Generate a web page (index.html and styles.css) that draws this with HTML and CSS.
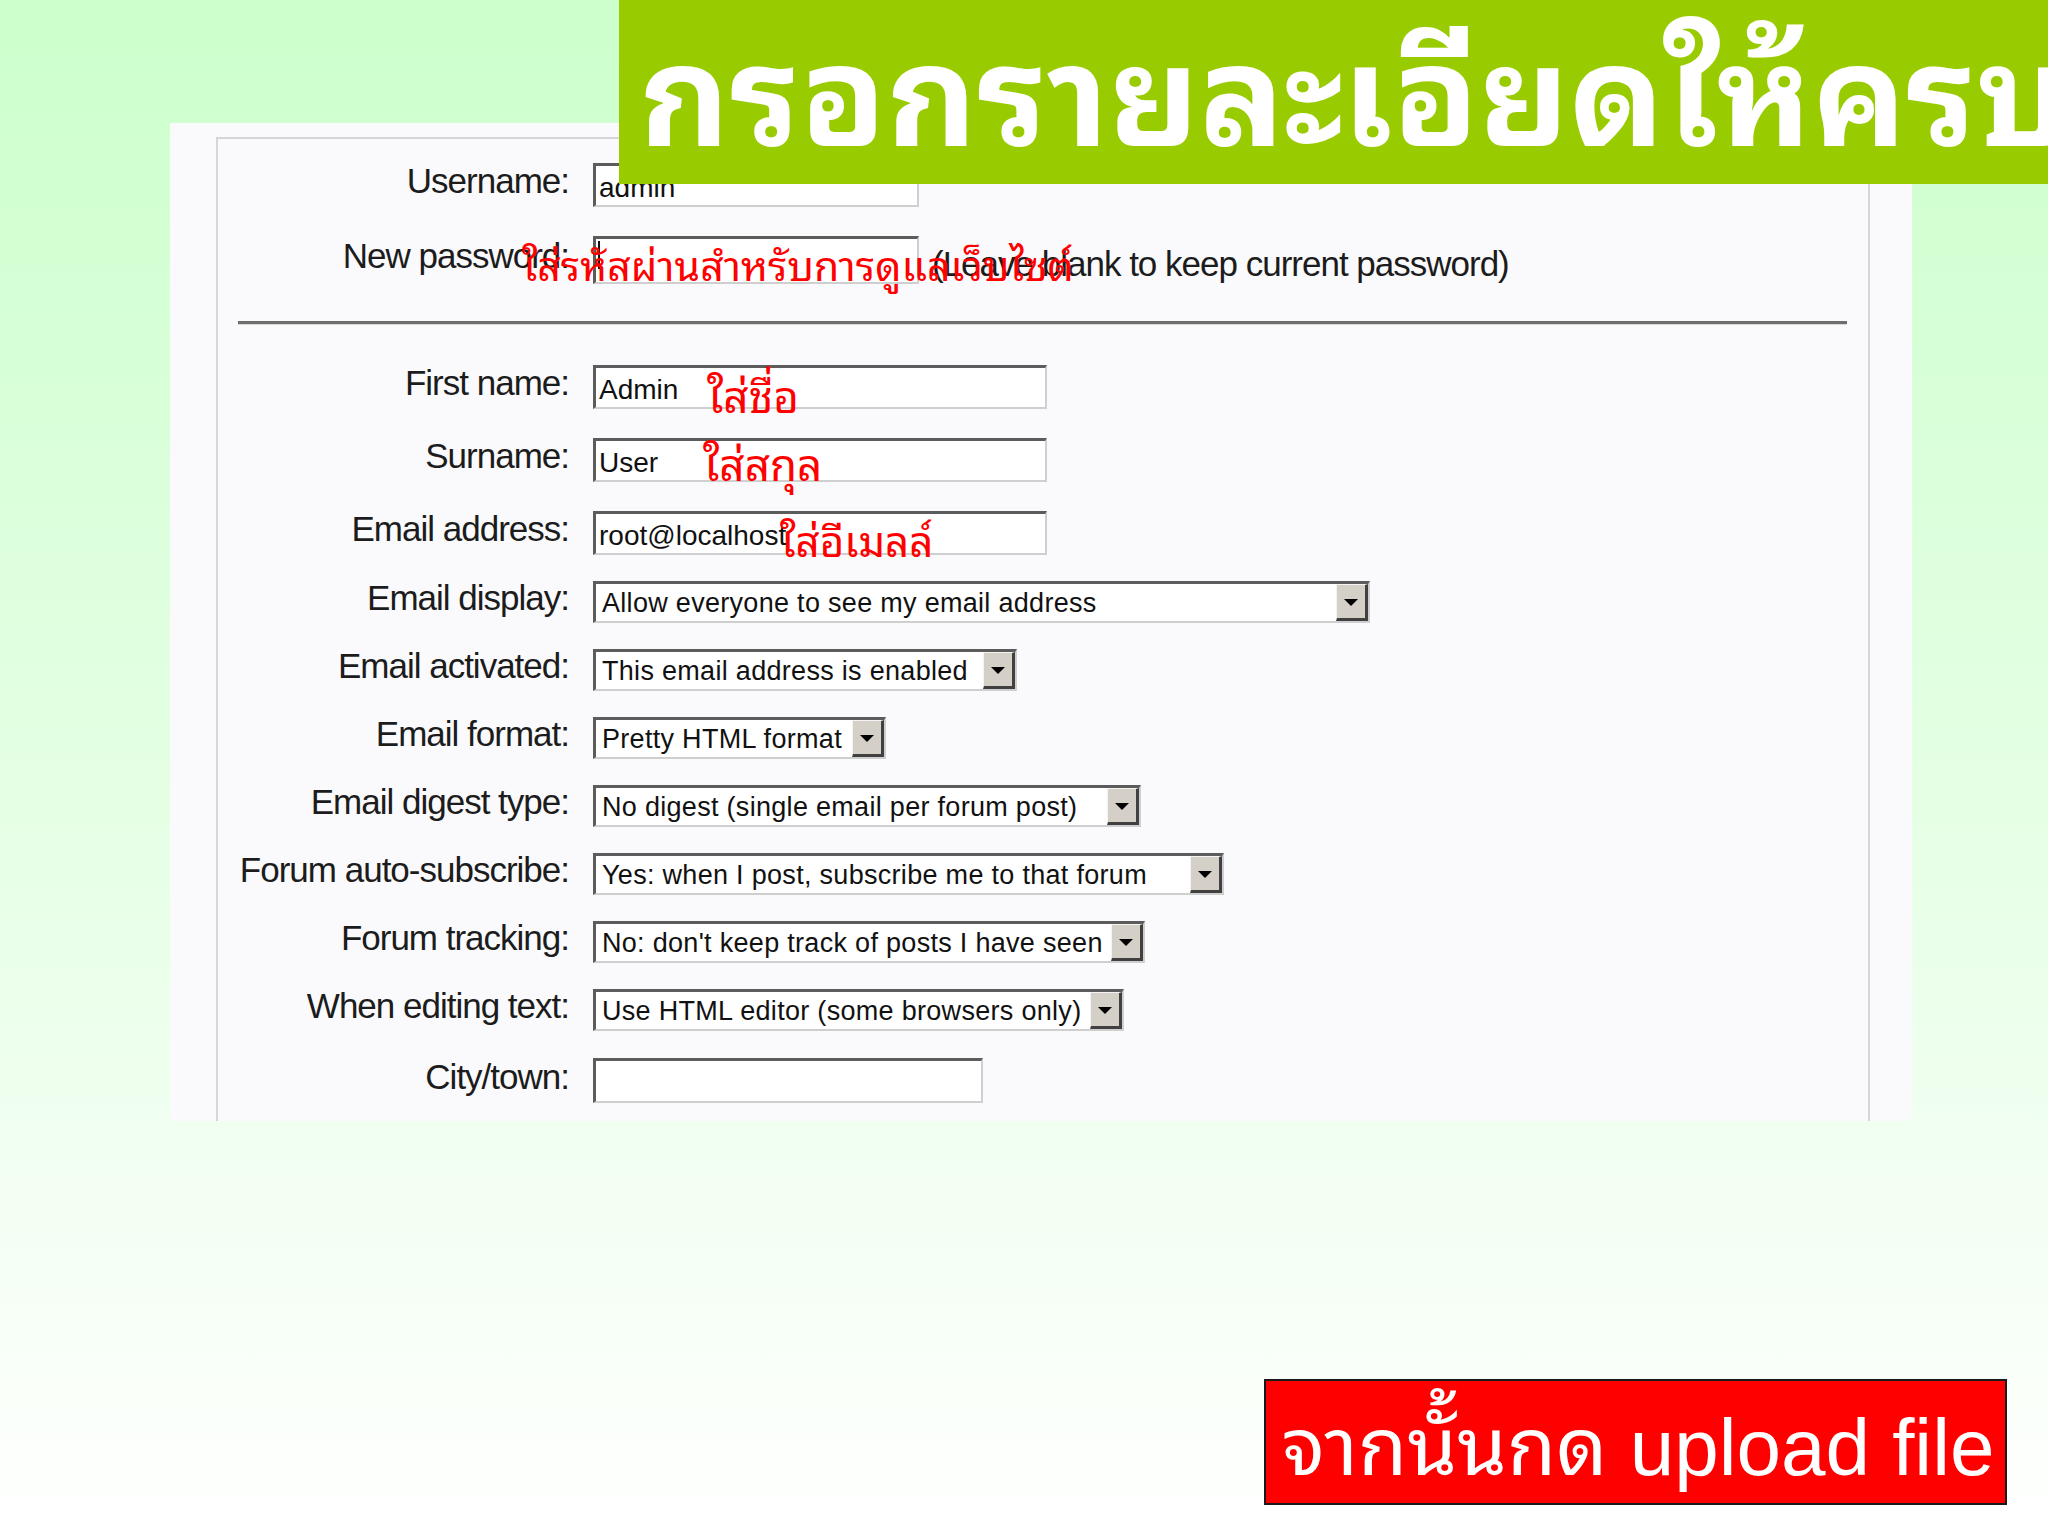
FILE: index.html
```html
<!DOCTYPE html>
<html lang="th">
<head>
<meta charset="utf-8">
<title>กรอกรายละเอียดให้ครบ</title>
<link rel="stylesheet" href="styles.css">
</head>
<body>
<div class="slide">
  <div class="title-bar"><h1 class="title">กรอกรายละเอียดให้ครบ</h1></div>

  <div class="panel">
    <div class="fieldset">
      <div class="row first">
        <span class="label">Username:</span>
        <span class="field w-short"><span class="val">admin</span></span>
      </div>
      <div class="row">
        <span class="label">New password:</span>
        <span class="field-line">
          <span class="field w-short"><span class="caret"></span></span>
          <span class="hint">(Leave blank to keep current password)</span>
        </span>
      </div>

      <div class="rule"></div>

      <div class="row after-rule">
        <span class="label">First name:</span>
        <span class="field w-mid"><span class="val">Admin</span></span>
      </div>
      <div class="row">
        <span class="label">Surname:</span>
        <span class="field w-mid"><span class="val">User</span></span>
      </div>
      <div class="row">
        <span class="label">Email address:</span>
        <span class="field w-mid"><span class="val">root@localhost</span></span>
      </div>

      <div class="row sel">
        <span class="label">Email display:</span>
        <span class="select w-display"><span class="opt">Allow everyone to see my email address</span><span class="arrow"></span></span>
      </div>
      <div class="row sel">
        <span class="label">Email activated:</span>
        <span class="select w-activated"><span class="opt">This email address is enabled</span><span class="arrow"></span></span>
      </div>
      <div class="row sel">
        <span class="label">Email format:</span>
        <span class="select w-format"><span class="opt">Pretty HTML format</span><span class="arrow"></span></span>
      </div>
      <div class="row sel">
        <span class="label">Email digest type:</span>
        <span class="select w-digest"><span class="opt">No digest (single email per forum post)</span><span class="arrow"></span></span>
      </div>
      <div class="row sel">
        <span class="label">Forum auto-subscribe:</span>
        <span class="select w-auto"><span class="opt">Yes: when I post, subscribe me to that forum</span><span class="arrow"></span></span>
      </div>
      <div class="row sel">
        <span class="label">Forum tracking:</span>
        <span class="select w-track"><span class="opt">No: don't keep track of posts I have seen</span><span class="arrow"></span></span>
      </div>
      <div class="row sel">
        <span class="label">When editing text:</span>
        <span class="select w-edit"><span class="opt">Use HTML editor (some browsers only)</span><span class="arrow"></span></span>
      </div>
      <div class="row city">
        <span class="label">City/town:</span>
        <span class="field w-city"></span>
      </div>
    </div>

    <span class="note note-pass">ใส่รหัสผ่านสำหรับการดูแลเว็บไซต์</span>
    <span class="note note-first">ใส่ชื่อ</span>
    <span class="note note-sur">ใส่สกุล</span>
    <span class="note note-mail">ใส่อีเมลล์</span>
  </div>

  <div class="cta-wrap">
    <div class="cta">จากนั้นกด upload file</div>
  </div>
</div>
</body>
</html>
```

FILE: styles.css
```css
html, body {
  margin: 0;
  padding: 0;
}

body {
  width: 2048px;
  height: 1536px;
  overflow: hidden;
  background: linear-gradient(180deg, #ccffcc 0%, #e6ffe6 55%, #ffffff 100%);
  font-family: "Liberation Sans", Arial, sans-serif;
}

.slide {
  position: relative;
  width: 2048px;
  height: 1536px;
  padding-top: 123px;
  box-sizing: border-box;
}

/* ---------- title ---------- */
.title-bar {
  position: absolute;
  top: 0;
  left: 619px;
  right: 0;
  height: 184px;
  background: #99cc00;
  overflow: hidden;
  z-index: 3;
}

.title {
  margin: 0;
  padding-left: 20px;
  font-family: "Noto Sans Thai Looped", "Noto Sans Thai", "Noto Sans", sans-serif;
  font-weight: 700;
  font-size: 140px;
  line-height: 167px;
  color: #ffffff;
  white-space: nowrap;
}

/* ---------- screenshot panel ---------- */
.panel {
  position: relative;
  margin-left: 170px;
  width: 1742px;
  height: 998px;
  background: #fafafc;
  padding: 14px 42px 0 46px;
  box-sizing: border-box;
}

.fieldset {
  height: 100%;
  border: 2px solid #d6d6d8;
  border-bottom: none;
  box-sizing: border-box;
  padding-top: 24px;
}

.row {
  display: grid;
  grid-template-columns: 351px auto;
  column-gap: 24px;
  align-items: center;
  height: 44px;
  margin-top: 29px;
}

.row.first { margin-top: 0; }
.row.after-rule { margin-top: 40px; }
.row.sel { height: 42px; margin-top: 26px; }
.row.city { height: 45px; margin-top: 27px; }

.label {
  justify-self: end;
  font-size: 35px;
  letter-spacing: -1px;
  color: #1c1c1c;
  white-space: nowrap;
  line-height: 44px;
  margin-top: -8px;
}

.field,
.select {
  display: flex;
  align-items: center;
  height: 100%;
  background: #ffffff;
  border-top: 3px solid #5c5c5c;
  border-left: 3px solid #5c5c5c;
  border-right: 2px solid #cfcfcf;
  border-bottom: 2px solid #cfcfcf;
  box-sizing: border-box;
  overflow: hidden;
}

.field-line {
  display: flex;
  align-items: center;
  height: 100%;
  gap: 13px;
}

.val {
  padding-left: 3px;
  font-size: 28px;
  color: #111;
  white-space: nowrap;
  margin-top: 4px;
}

.caret {
  display: block;
  width: 2px;
  height: 28px;
  margin-left: 2px;
  background: #111;
  align-self: flex-start;
  margin-top: 2px;
}

.hint {
  font-size: 35px;
  letter-spacing: -1px;
  color: #1c1c1c;
  white-space: nowrap;
  margin-top: 8px;
}

.w-short { width: 326px; }
.w-mid { width: 454px; }
.w-city { width: 390px; }

.select {
  justify-content: space-between;
  align-items: stretch;
}

.opt {
  align-self: center;
  padding-left: 6px;
  font-size: 27px;
  letter-spacing: 0.3px;
  color: #111;
  white-space: nowrap;
  margin-top: 2px;
}

.arrow {
  position: relative;
  flex: none;
  width: 32px;
  background: #d4d0c8;
  border-top: 1px solid #f4f4f4;
  border-left: 1px solid #f4f4f4;
  border-right: 3px solid #404040;
  border-bottom: 3px solid #404040;
  box-sizing: border-box;
}

.arrow::after {
  content: "";
  position: absolute;
  left: 50%;
  top: 50%;
  margin-left: -7px;
  margin-top: -3px;
  border-left: 7px solid transparent;
  border-right: 7px solid transparent;
  border-top: 7px solid #000;
}

.w-display { width: 777px; }
.w-activated { width: 424px; }
.w-format { width: 293px; }
.w-digest { width: 548px; }
.w-auto { width: 631px; }
.w-track { width: 552px; }
.w-edit { width: 531px; }

.rule {
  margin: 41px 21px 0 20px;
  height: 0;
  border-top: 3px solid #6e6e6e;
  border-bottom: 1px solid #d8d8d8;
}

/* ---------- red annotations ---------- */
.note {
  position: absolute;
  font-family: "Noto Sans Thai Looped", "Noto Sans Thai", "Noto Sans", sans-serif;
  font-size: 44px;
  line-height: 1;
  color: #ff0000;
  white-space: nowrap;
  z-index: 2;
}

.note-pass { left: 352px; top: 119px; font-size: 41px; }
.note-first { left: 537px; top: 248px; }
.note-sur { left: 533px; top: 316px; }
.note-mail { left: 610px; top: 394px; font-size: 42px; }

/* ---------- call to action ---------- */
.cta-wrap {
  display: flex;
  justify-content: flex-end;
  margin-top: 258px;
  padding-right: 41px;
}

.cta {
  width: 743px;
  height: 126px;
  box-sizing: border-box;
  background: #ff0000;
  border: 2px solid #1a1a1a;
  color: #ffffff;
  font-family: "Liberation Sans", "Noto Sans Thai Looped", "Noto Sans Thai", sans-serif;
  font-size: 80px;
  line-height: 108px;
  padding-top: 13px;
  padding-left: 16px;
  white-space: nowrap;
}
```
